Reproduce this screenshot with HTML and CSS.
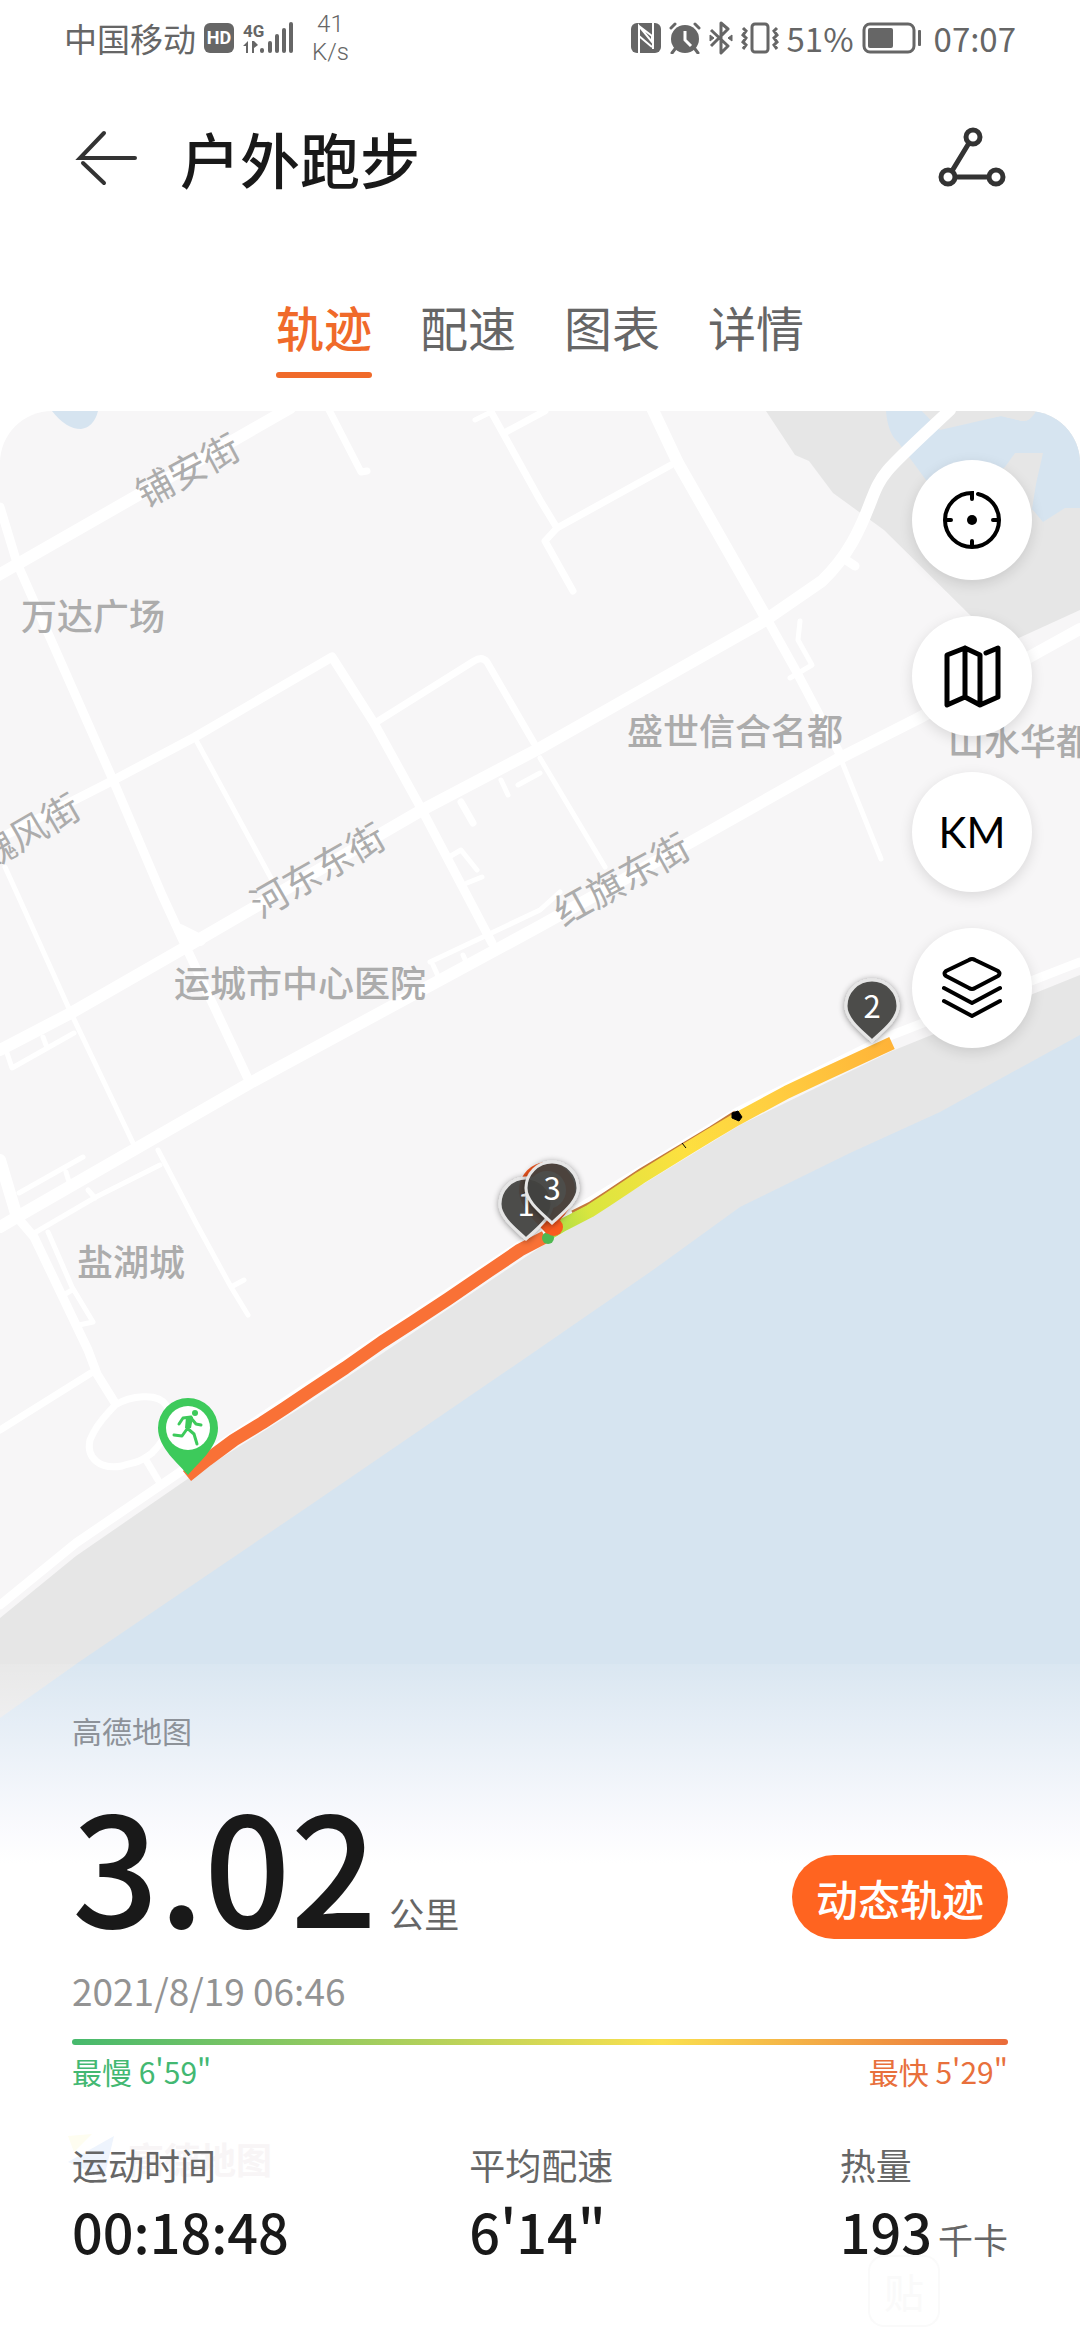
FILE: index.html
```html
<!DOCTYPE html>
<html lang="zh-CN">
<head>
    <meta charset="UTF-8">
    <meta name="viewport" content="width=device-width, initial-scale=1.0">
    <title>户外跑步</title>
    <link rel="stylesheet" href="styles.css">
</head>
<body>
    <div class="status-bar">
        <div class="status-left">
            <span>中国移动</span>
            <span class="hd-badge">HD</span>
            <svg class="signal" width="54" height="34" viewBox="0 0 54 34" fill="#666">
                <text x="1" y="16" font-size="17" font-weight="700">4G</text>
                <path d="M1 25l5-5v12H4v-7zM10 20v12h2v-5l4-3-4-4z"/>
                <rect x="18" y="27" width="4" height="5" rx="2"/>
                <rect x="26" y="20" width="4" height="12" rx="2"/>
                <rect x="33" y="13" width="4" height="19" rx="2"/>
                <rect x="40" y="7" width="4" height="25" rx="2"/>
                <rect x="47" y="1" width="4" height="31" rx="2"/>
            </svg>
            <span class="net-speed">41<br>K/s</span>
        </div>
        <div class="status-right">
            <svg width="30" height="32" viewBox="0 0 30 32">
                <rect x="0" y="1" width="30" height="30" rx="6" fill="#666"/>
                <path d="M8 31V4l13 16V14L8 4M8 14l13 11M22 1V27" fill="none" stroke="#fff" stroke-width="2"/>
            </svg>
            <svg width="32" height="32" viewBox="0 0 32 32">
                <circle cx="16" cy="17" r="14" fill="#666"/>
                <path d="M2 6l4-4M30 6l-4-4M6 27l-3 4M26 27l3 4" stroke="#666" stroke-width="3" stroke-linecap="round"/>
                <path d="M16 9v9l6 6" fill="none" stroke="#fff" stroke-width="3"/>
            </svg>
            <svg width="24" height="34" viewBox="0 0 24 34" fill="none" stroke="#666" stroke-width="3" stroke-linejoin="round">
                <path d="M2 9l17 16-7 7V2l7 6L2 25"/>
                <path d="M1 14l4 3-4 3zM23 14l-4 3 4 3z" fill="#666" stroke-width="1"/>
            </svg>
            <svg width="38" height="32" viewBox="0 0 38 32" fill="none" stroke="#666" stroke-width="3">
                <rect x="11" y="2" width="16" height="28" rx="3"/>
                <path d="M2 6l3 3-3 4 3 3-3 4 3 3-3 4M36 6l-3 3 3 4-3 3 3 4-3 3 3 4"/>
            </svg>
            <span>51%</span>
            <svg width="60" height="32" viewBox="0 0 60 32">
                <rect x="2" y="2" width="50" height="28" rx="6" fill="none" stroke="#666" stroke-width="3"/>
                <rect x="6" y="6" width="25" height="20" rx="2" fill="#666"/>
                <rect x="56" y="8" width="3" height="16" rx="1" fill="#666"/>
            </svg>
            <span class="clock">07:07</span>
        </div>
    </div>

    <header class="app-header">
        <button type="button" class="icon-button" aria-label="返回">
            <svg width="66" height="60" viewBox="0 0 66 60" fill="none" stroke="#333" stroke-width="4" stroke-linecap="round">
                <path d="M63 30H8L32 5M11 35l21 20"/>
            </svg>
        </button>
        <h1>户外跑步</h1>
        <button type="button" class="icon-button" aria-label="轨迹点">
            <svg width="72" height="64" viewBox="0 0 72 64" fill="none" stroke="#333" stroke-width="5">
                <circle cx="37" cy="11" r="7"/>
                <circle cx="12" cy="51" r="7"/>
                <circle cx="60" cy="51" r="7"/>
                <path d="M33 17L16 45M19 51h34"/>
            </svg>
        </button>
    </header>

    <nav class="tabs">
        <a href="#track" class="active">轨迹</a>
        <a href="#pace">配速</a>
        <a href="#chart">图表</a>
        <a href="#detail">详情</a>
    </nav>

    <section class="map" id="track">
        <svg class="map-canvas" viewBox="0 411 1080 1459">
            <defs>
                <linearGradient id="trackColor" gradientUnits="userSpaceOnUse" x1="548" y1="1234" x2="892" y2="1042">
                    <stop offset="0" stop-color="#a5dc48"/>
                    <stop offset="0.12" stop-color="#d9e63f"/>
                    <stop offset="0.4" stop-color="#fde03f"/>
                    <stop offset="0.65" stop-color="#ffcf41"/>
                    <stop offset="1" stop-color="#ffb338"/>
                </linearGradient>
                <filter id="pinShadow" x="-30%" y="-30%" width="160%" height="160%">
                    <feDropShadow dx="0" dy="1" stdDeviation="3" flood-color="#000" flood-opacity="0.45"/>
                </filter>
                <path id="pin" d="M0 34C-9 25-26 13-26-1a26 26 0 0 1 52 0C26 13 9 25 0 34z"/>
            </defs>
            <rect x="0" y="411" width="1080" height="1459" fill="#f7f6f7"/>

            <!-- land and water -->
            <path fill="#e6e6e6" d="M766 411L795 455 809 461 833 493 884 530 970 615 1001 646 1080 610V411z"/>
            <path fill="#d6e4f0" d="M886 411Q888 434 898 442L926 480 1000 530 1032 509 1043 522 1065 508H1080V411H1036Q1030 422 1022 421L1001 416 940 427 922 411z"/>
            <path fill="#e6e6e6" d="M922 411L940 430 1001 416 1022 421Q1030 422 1036 411zM1043 453L1015 453 1005 467 970 490 1000 530 1032 509 1036 484z"/>
            <path fill="#d6e4f0" d="M52 411Q66 429 81 429 94 427 98 411z"/>
            <path fill="#e6e6e6" d="M1080 975L892 1051 740 1125 548 1242 310 1402 189 1478 76 1556 0 1618V1870H1080z"/>
            <path fill="#d6e4f0" d="M1080 1035L940 1112 850 1153 740 1207 653 1270 540 1348 309 1506 79 1662 0 1718V1870H1080z"/>

            <!-- roads -->
            <g class="road">
                <g stroke-width="5">
                    <path d="M196 740L272 880M5 867L20 900 71 1013 133 1143M158 1150L196 1223 231 1287 248 1315M231 1287L244 1280"/>
                    <path d="M19 1193L83 1157M36 1232L96 1197 160 1165M66 1172L69 1182M88 1190L95 1198M7 1053L12 1068 74 1033M43 1037L46 1045"/>
                    <path d="M48 1232L72 1287 93 1322 79 1325M62 1296L72 1290M430 962L540 910 560 892M433 965L438 976M463 955L467 964"/>
                    <path d="M540 758L605 867M501 780L508 795M518 785L540 773M449 857L461 850 477 870M467 883L482 877M840 757L881 859M475 420L489 413"/>
                    <path d="M800 621L798 640 812 665 790 678"/>
                </g>
                <g stroke-width="7">
                    <path d="M328 408L361 472 367 471M489 408L540 500 557 528M504 433L545 411M375 723L474 661Q482 656 487 662L534 743"/>
                    <path d="M671 465L557 528 545 541 573 591M461 802L473 823M91 1373L0 1430"/>
                    <path d="M115 1405C130 1396 158 1392 166 1405S172 1432 152 1453C136 1465 132 1462 122 1466 100 1470 86 1458 90 1440 98 1420 110 1412 115 1405zM146 1460L158 1480"/>
                </g>
                <g stroke-width="9">
                    <path d="M0 838L110 782 195 737 332 657 374 723 422 810 492 943M843 558L855 566M767 619L795 669 840 754"/>
                    <path d="M0 507L17 563 113 780 162 895 186 947 250 1083M17 1217L34 1237 88 1350 97 1374 115 1403"/>
                    <path d="M0 1605L76 1543 183 1470 310 1385 543 1230 737 1112 892 1035 1080 962"/>
                </g>
                <g stroke-width="12">
                    <path d="M-5 577L290 408M0 1050L71 1013 186 947 422 810 540 748 764 621 822 581C848 556 860 530 871 501S884 472 950 410"/>
                    <path d="M0 1227L17 1217 250 1083 540 926 691 842 840 758 919 718 1080 629M652 408L678 463 767 619M0 1160L17 1217M180 930L200 940"/>
                </g>
            </g>

            <!-- place names -->
            <g class="place">
                <g font-weight="500">
                    <text x="21" y="630">万达广场</text>
                    <text x="627" y="745">盛世信合名都</text>
                    <text x="948" y="755">山水华都</text>
                    <text x="174" y="997">运城市中心医院</text>
                    <text x="77" y="1276">盐湖城</text>
                </g>
                <g class="street">
                    <text transform="translate(188 471) rotate(-28)" y="13">铺安街</text>
                    <text transform="translate(29 832) rotate(-30)" y="13">魏风街</text>
                    <text transform="translate(318 871) rotate(-30)" y="13">河东东街</text>
                    <text transform="translate(622 880) rotate(-29)" y="13">红旗东街</text>
                </g>
            </g>

            <!-- running track -->
            <g fill="none" stroke-width="13" stroke-linejoin="round">
                <path stroke="#c47a3c" stroke-width="3" d="M572 1212L590 1203 607 1192 640 1170 685 1143 710 1128 735 1112"/>
                <path stroke="url(#trackColor)" d="M548 1234L563 1225 590 1211 607 1200 640 1178 687 1149 710 1135 737 1119 787 1092 823 1075 892 1043"/>
                <path stroke="#f97136" d="M187 1476L207 1460 234 1440 262 1423 285 1408 310 1391 345 1368 382 1342 413 1322 448 1299 489 1271 520 1250 545 1237"/>
            </g>
            <path d="M732 1113L738 1111 742 1117 739 1121 732 1118zM682 1143L686 1148" stroke="#000" stroke-width="1"/>
            <circle cx="548" cy="1238" r="6" fill="#4fb851"/>
            <circle cx="554" cy="1227" r="9" fill="#fb5a1e"/>

            <!-- end point, under the kilometre pins -->
            <g transform="translate(547 1190)">
                <path d="M0 44C-10 33-28 18-28 0a28 28 0 0 1 56 0C28 18 10 33 0 44z" fill="#f4571f"/>
                <circle r="19" fill="#fff"/>
            </g>

            <!-- kilometre pins -->
            <g class="pin">
                <g transform="translate(526 1205)"><use href="#pin" filter="url(#pinShadow)"/><text y="11">1</text></g>
                <g transform="translate(552 1189)"><use href="#pin" filter="url(#pinShadow)"/><text y="11">3</text></g>
                <g transform="translate(872 1007)"><use href="#pin" filter="url(#pinShadow)"/><text y="11">2</text></g>
            </g>

            <!-- start point -->
            <g transform="translate(188 1428)">
                <path d="M0 47C-9 36-30 20-30 0a30 30 0 0 1 60 0C30 20 9 36 0 47z" fill="#3dca5b"/>
                <circle r="22" fill="#fff"/>
                <circle cx="7" cy="-15" r="3" fill="#3dca5b"/>
                <path d="M-9-4L-5-10 3-11-1 0 6 6 9 16M3-10L8-4 13-3M-1 1L-6 8-14 7" fill="none" stroke="#3dca5b" stroke-width="3" stroke-linecap="round" stroke-linejoin="round"/>
                <path d="M-2-11L5-11 3 0-3 0z" fill="#3dca5b"/>
            </g>
        </svg>

        <div class="map-tools">
            <button type="button" aria-label="定位">
                <svg width="64" height="64" viewBox="0 0 64 64" fill="none" stroke="#000" stroke-width="4" stroke-linecap="round">
                    <path d="M32 11V5A27 27 0 1 0 59 32 27 27 0 0 0 38 6M5 32h6M53 32h6M32 53v6"/>
                    <circle cx="32" cy="32" r="5" fill="#000" stroke="none"/>
                </svg>
            </button>
            <button type="button" aria-label="地图类型">
                <svg width="64" height="64" viewBox="0 0 64 64" fill="none" stroke="#000" stroke-width="5" stroke-linejoin="round" stroke-linecap="round">
                    <path d="M46 9L58 4V53L40 61 25 53 7 61V11L25 4 40 11V61M25 4V53"/>
                </svg>
            </button>
            <button type="button">KM</button>
            <button type="button" aria-label="图层">
                <svg width="64" height="64" viewBox="0 0 64 64" fill="none" stroke="#000" stroke-width="4" stroke-linejoin="round" stroke-linecap="round">
                    <path d="M29 4Q32 2 35 4L58 15Q61 18 58 20L35 32Q32 34 29 32L6 20Q3 18 6 15z"/>
                    <path d="M4 32L32 47 60 32M4 45L32 60 60 45"/>
                </svg>
            </button>
        </div>
    </section>

    <main class="summary">
        <p class="map-source">高德地图</p>
        <div class="distance-row">
            <p class="distance"><strong>3.02</strong><span class="unit">公里</span></p>
            <button type="button" class="play-button">动态轨迹</button>
        </div>
        <p class="date">2021/8/19 06:46</p>
        <div class="pace-bar"></div>
        <div class="pace-labels">
            <span class="slow">最慢 6'59"</span>
            <span class="fast">最快 5'29"</span>
        </div>
        <div class="stats">
            <span class="map-logo" aria-hidden="true">
                <svg width="52" height="52" viewBox="0 0 52 52">
                    <path d="M0 30L46 4 36 46 18 38z" fill="#eef4fd"/>
                    <path d="M0 4l24-2-18 18z" fill="#fefdf0"/>
                </svg>
                高德地图
            </span>
            <dl>
                <dt>运动时间</dt>
                <dd>00:18:48</dd>
            </dl>
            <dl>
                <dt>平均配速</dt>
                <dd>6'14"</dd>
            </dl>
            <dl>
                <dt>热量</dt>
                <dd>193<span class="unit">千卡</span></dd>
            </dl>
            <span class="stamp" aria-hidden="true">贴</span>
        </div>
    </main>
</body>
</html>
```

FILE: styles.css
```css
* {
    box-sizing: border-box;
}
body {
    margin: 0;
    min-height: 100vh;
    background-color: #fff;
    color: #191919;
    font-family: "Noto Sans CJK SC", "Noto Sans", sans-serif;
    overflow-x: hidden;
}
p, h1, dl, dd {
    margin: 0;
}
button {
    border: none;
    padding: 0;
    font-family: inherit;
    cursor: pointer;
}
svg {
    display: block;
    flex-shrink: 0;
}

/* Status bar */
.status-bar {
    display: flex;
    justify-content: space-between;
    align-items: center;
    height: 76px;
    padding: 0 64px;
    font-size: 33px;
    line-height: 48px;
    color: #666;
}
.status-left,
.status-right {
    display: flex;
    align-items: center;
}
.status-left {
    gap: 8px;
}
.status-right {
    gap: 8px;
}
.hd-badge {
    width: 30px;
    height: 30px;
    border-radius: 6px;
    background-color: #666;
    color: #fff;
    font: 700 18px/30px "Roboto", sans-serif;
    text-align: center;
}
.signal {
    font-family: "Roboto", sans-serif;
}
.net-speed {
    margin-left: 8px;
    font: 300 24px/28px "Roboto", sans-serif;
    text-align: center;
}
.clock {
    margin-left: 4px;
}

/* Header */
.app-header {
    display: flex;
    align-items: center;
    height: 164px;
    padding: 0 72px;
}
.app-header h1 {
    flex: 1;
    padding-left: 42px;
    font-size: 60px;
    line-height: 84px;
    font-weight: 500;
}
.icon-button {
    background: none;
}

/* Tabs */
.tabs {
    display: flex;
    justify-content: center;
    gap: 48px;
    padding: 50px 0 33px;
}
.tabs a {
    font-size: 48px;
    line-height: 72px;
    color: #666;
    text-decoration: none;
}
.tabs a::after {
    content: "";
    display: block;
    height: 6px;
    margin-top: 10px;
    border-radius: 3px;
}
.tabs .active {
    color: #f06a2a;
    font-weight: 500;
}
.tabs .active::after {
    background-color: #f06a2a;
}

/* Map */
.map {
    position: relative;
    border-radius: 52px 52px 0 0;
    overflow: hidden;
}
.map-canvas {
    width: 100%;
}
.road {
    fill: none;
    stroke: #fff;
    stroke-linecap: round;
    stroke-linejoin: round;
}
.place {
    font-size: 36px;
    fill: #acacac;
}
.street {
    font-size: 37px;
    text-anchor: middle;
}
.pin {
    font-size: 31px;
    text-anchor: middle;
    fill: #fff;
}
.pin use {
    fill: rgba(66, 66, 64, 0.9);
    stroke: #e6e6e6;
    stroke-width: 3px;
}
.map-tools {
    position: absolute;
    top: 49px;
    right: 48px;
    display: flex;
    flex-direction: column;
    gap: 36px;
}
.map-tools button {
    display: flex;
    justify-content: center;
    align-items: center;
    width: 120px;
    height: 120px;
    border-radius: 50%;
    background-color: #fff;
    color: #000;
    font-family: "Lato", sans-serif;
    font-size: 42px;
    box-shadow: 0 4px 14px rgba(0, 0, 0, 0.12);
}

/* Summary, its top part fades over the map */
.summary {
    position: relative;
    margin-top: -206px;
    padding: 44px 72px 71px;
    background: linear-gradient(rgba(255, 255, 255, 0.1), rgba(253, 252, 255, 0.9) 160px, #fff 200px);
}
.map-source {
    font-size: 30px;
    line-height: 44px;
    color: #8d9299;
}
.distance-row {
    display: flex;
    justify-content: space-between;
    align-items: flex-end;
    margin-top: 30px;
}
.distance {
    display: flex;
    align-items: baseline;
    gap: 12px;
}
.distance strong {
    font-size: 152px;
    line-height: 160px;
    font-weight: 500;
}
.unit {
    font-size: 35px;
    line-height: 52px;
    font-weight: 400;
    color: #666;
}
.play-button {
    height: 84px;
    margin-bottom: 3px;
    padding: 0 24px;
    border-radius: 42px;
    background-color: #ff6420;
    color: #fff;
    font-size: 42px;
    font-weight: 500;
}
.date {
    margin-top: 22px;
    font-size: 37px;
    line-height: 52px;
    color: #939393;
}
.pace-bar {
    height: 6px;
    margin-top: 23px;
    border-radius: 3px;
    background: linear-gradient(to right, #46b96d, #fae04f 63%, #ea6b3a);
}
.pace-labels {
    display: flex;
    justify-content: space-between;
    margin-top: 4px;
    font-size: 30px;
    line-height: 44px;
}
.slow {
    color: #43b872;
}
.fast {
    color: #e8703c;
}
.stats {
    position: relative;
    display: grid;
    grid-template-columns: 396fr 369fr auto;
    margin-top: 45px;
}
.stats dl {
    position: relative;
}
.stats dt {
    font-size: 36px;
    line-height: 52px;
    color: #666;
}
.stats dd {
    display: flex;
    align-items: baseline;
    gap: 6px;
    margin-top: 3px;
    font-size: 54px;
    line-height: 76px;
    font-weight: 500;
}
/* Faint marks behind the figures */
.map-logo {
    position: absolute;
    top: -6px;
    left: -4px;
    display: flex;
    align-items: center;
    gap: 8px;
    font-size: 36px;
    line-height: 52px;
    font-weight: 700;
    color: #f8f5f6;
}
.stamp {
    position: absolute;
    top: 117px;
    right: 68px;
    width: 72px;
    height: 72px;
    border: 2px solid #fafafa;
    border-radius: 16px;
    color: #fafafa;
    font-size: 40px;
    line-height: 68px;
    text-align: center;
}
```
